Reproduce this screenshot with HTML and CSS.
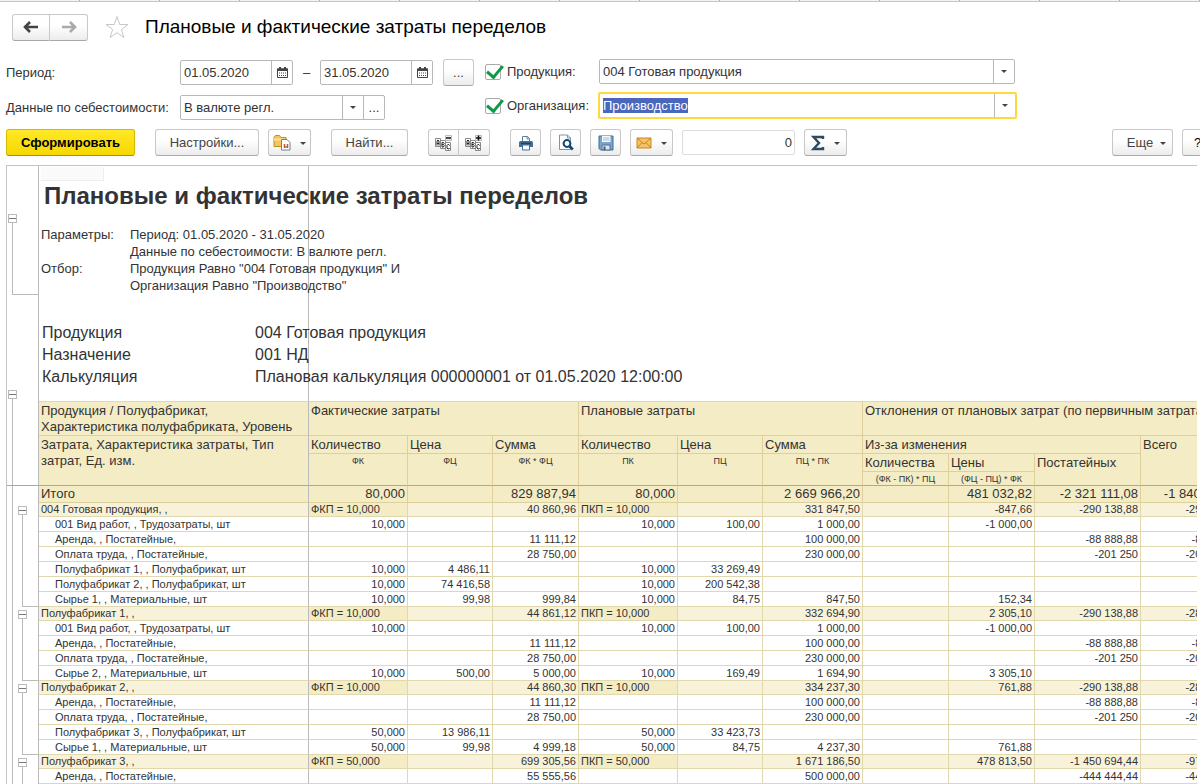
FILE: index.html
```html
<!DOCTYPE html>
<html lang="ru">
<head>
    <meta charset="UTF-8">
    <title>Плановые и фактические затраты переделов</title>
    <meta name="viewport" content="width=device-width, initial-scale=1.0">
    <link rel="stylesheet" href="styles.css">
</head>
<body>
    <div class="tab-strip"></div>

    <header class="page-header">
        <div class="btn-pair">
            <button type="button" class="btn nav" aria-label="Назад">
                <svg width="16" height="12" viewBox="0 0 16 12"><path d="M7 1L2 6l5 5M2 6h13" fill="none" stroke="#444" stroke-width="2.6"/></svg>
            </button>
            <button type="button" class="btn nav" aria-label="Вперед">
                <svg width="16" height="12" viewBox="0 0 16 12"><path d="M9 1l5 5-5 5M14 6H1" fill="none" stroke="#aaa" stroke-width="2.6"/></svg>
            </button>
        </div>
        <button type="button" class="star" aria-label="В избранное">
            <svg width="26" height="24" viewBox="0 0 26 24"><path d="M13 1.500l2.700 8h8.300l-6.600 5 2.500 8-6.900-4.900-6.900 4.900 2.500-8-6.600-5h8.300z" fill="#fff" stroke="#c4c8cc"/></svg>
        </button>
        <h1>Плановые и фактические затраты переделов</h1>
    </header>

    <!-- Report filters -->
    <form class="filters">
        <div class="filters-left">
            <div class="row">
                <label for="dateFrom" class="caption">Период:</label>
                <div class="field date">
                    <input type="text" id="dateFrom" value="01.05.2020">
                    <button type="button" aria-label="Календарь">
                        <svg width="11" height="11" viewBox="0 0 11 11"><path d="M.5 2h10v8.500H.5z" fill="#fff" stroke="#444"/><path d="M0 1.500h11v2.500H0zM2 0h2v2H2zM7 0h2v2H7z" fill="#444"/><path d="M2 6h7M2 8.500h7" stroke="#444" stroke-dasharray="1 1"/></svg>
                    </button>
                </div>
                <span class="dash">–</span>
                <div class="field date">
                    <input type="text" id="dateTo" value="31.05.2020" aria-label="Конец периода">
                    <button type="button" aria-label="Календарь">
                        <svg width="11" height="11" viewBox="0 0 11 11"><path d="M.5 2h10v8.500H.5z" fill="#fff" stroke="#444"/><path d="M0 1.500h11v2.500H0zM2 0h2v2H2zM7 0h2v2H7z" fill="#444"/><path d="M2 6h7M2 8.500h7" stroke="#444" stroke-dasharray="1 1"/></svg>
                    </button>
                </div>
                <button type="button" class="btn period-btn">...</button>
            </div>
            <div class="row">
                <label for="costData" class="caption">Данные по себестоимости:</label>
                <div class="field cost">
                    <select id="costData"><option>В валюте регл.</option></select>
                    <span class="arrow-box"><i class="arrow"></i></span>
                    <button type="button">...</button>
                </div>
            </div>
        </div>
        <div class="filters-right">
            <div class="row">
                <input type="checkbox" id="useProduct" class="check" checked>
                <label for="useProduct" class="check-caption">Продукция:</label>
                <div class="field combo">
                    <input type="text" value="004 Готовая продукция" aria-label="Продукция">
                    <button type="button" aria-label="Выбрать"><i class="arrow"></i></button>
                </div>
            </div>
            <div class="row">
                <input type="checkbox" id="useOrg" class="check" checked>
                <label for="useOrg" class="check-caption">Организация:</label>
                <div class="field combo active">
                    <input type="text" id="orgInput" value="Производство" aria-label="Организация">
                    <button type="button" aria-label="Выбрать"><i class="arrow"></i></button>
                </div>
            </div>
        </div>
    </form>

    <div class="toolbar">
        <button type="button" class="btn primary">Сформировать</button>
        <div class="group">
            <button type="button" class="btn settings">Настройки...</button>
            <button type="button" class="btn drop" aria-label="Варианты отчета">
                <svg width="18" height="17" viewBox="0 0 18 17"><path d="M1 3.500l1.500-2h4l1.500 2h5v9H1z" fill="#f3c55b" stroke="#c08f2e"/><path d="M1 5.500h11" stroke="#fbe2a0" stroke-width="2"/><path d="M8.500 5.500h5.500l3 3v7.500H8.500z" fill="#fff" stroke="#6d8296"/><path d="M11.500 14v-4M14.500 14v-4" stroke="#e0483a" stroke-width="1.500"/><path d="M13 14v-2" stroke="#54a04e" stroke-width="1.500"/></svg>
                <i class="arrow"></i>
            </button>
        </div>
        <button type="button" class="btn find">Найти...</button>
        <div class="btn-pair">
            <button type="button" class="btn icon" aria-label="Свернуть группы">
                <svg width="18" height="18" viewBox="0 0 18 18"><g fill="#fff" stroke="#888"><path d="M.5 4.500h5v8h-5z"/><path d="M5.500 6.500h5v8h-5z"/><path d="M10.500 8.500h5v8h-5z"/><path d="M10.500 1.500h6v5h-6z" fill="#eee" stroke="#bbb"/></g><g fill="none" stroke="#222"><path d="M2 11.500V7l1-1 1 1v4.500M2 9.500h2"/><path d="M7 13V8.500h1.500l.7 1-.7 1H7m1.500 0l.7 1-.7 1.500H7"/><path d="M14.500 11.500l-.7-1h-1l-.8 1v2.500l.8 1h1l.7-1"/></g><path d="M11 4h5" stroke="#111" stroke-width="1.500"/></svg>
            </button>
            <button type="button" class="btn icon" aria-label="Развернуть группы">
                <svg width="18" height="18" viewBox="0 0 18 18"><g fill="#fff" stroke="#888"><path d="M.5 4.500h5v8h-5z"/><path d="M5.500 6.500h5v8h-5z"/><path d="M10.500 8.500h5v8h-5z"/><path d="M10.500 1.500h6v5h-6z" fill="#eee" stroke="#bbb"/></g><g fill="none" stroke="#222"><path d="M2 11.500V7l1-1 1 1v4.500M2 9.500h2"/><path d="M7 13V8.500h1.500l.7 1-.7 1H7m1.500 0l.7 1-.7 1.500H7"/><path d="M14.500 11.500l-.7-1h-1l-.8 1v2.500l.8 1h1l.7-1"/></g><path d="M11 4h5M13.500 1.500v5" stroke="#111" stroke-width="1.500"/></svg>
            </button>
        </div>
        <div class="group">
            <button type="button" class="btn icon" aria-label="Печать">
                <svg width="16" height="16" viewBox="0 0 16 16"><path d="M4.500 7V1.500h5l2 2V7" fill="#fff" stroke="#5c7f9e"/><path d="M9 1.500V4h2.500" fill="none" stroke="#5c7f9e"/><path d="M2.500 6h11q1.500 0 1.500 1.500V12H1V7.500Q1 6 2.500 6z" fill="#416f97"/><path d="M3 8.500h10" stroke="#1d4468" stroke-width="1.500"/><path d="M4.500 10h7v5h-7z" fill="#fff" stroke="#416f97"/></svg>
            </button>
            <button type="button" class="btn icon" aria-label="Предварительный просмотр">
                <svg width="17" height="17" viewBox="0 0 17 17"><path d="M2.500 1h8l3 3v11.500h-11z" fill="#fff" stroke="#7b95aa"/><path d="M10.500 1v3h3" fill="none" stroke="#7b95aa"/><circle cx="10" cy="9.500" r="3.400" fill="#fff" stroke="#0e4775" stroke-width="2"/><path d="M12.300 12l3.500 3.500" stroke="#0e4775" stroke-width="2.600"/></svg>
            </button>
            <button type="button" class="btn icon" aria-label="Сохранить">
                <svg width="16" height="16" viewBox="0 0 16 16"><path d="M1 1h14v14H2.500L1 13.500z" fill="#7ba3cf" stroke="#3f6a94"/><path d="M4 1h8.500v6H4z" fill="#f7f9fb"/><path d="M5 3h6.500M5 5h6.500" stroke="#a8b6c4"/><path d="M4 10h8v5H4z" fill="#dfe4e8" stroke="#55718c"/><path d="M5.500 11.500h2V15h-2z" fill="#3f5c78"/></svg>
            </button>
            <button type="button" class="btn drop" aria-label="Отправить">
                <svg width="16" height="12" viewBox="0 0 16 12"><path d="M1 1h14v10H1z" fill="#f6c366" stroke="#c4851f"/><path d="M1 1l7 6 7-6M1 11l5-5.500M15 11l-5-5.500" fill="none" stroke="#c4851f"/></svg>
                <i class="arrow"></i>
            </button>
            <input type="text" class="total" value="0" aria-label="Сумма ячеек">
            <button type="button" class="btn drop" aria-label="Сумма">
                <svg width="14" height="16" viewBox="0 0 14 16"><path d="M12 4V2H2.500L8 8l-5.500 6H12v-2" fill="none" stroke="#2f4a60" stroke-width="2.400"/></svg>
                <i class="arrow"></i>
            </button>
        </div>
        <div class="group right">
            <button type="button" class="btn more">Еще <i class="arrow"></i></button>
            <button type="button" class="btn help">?</button>
        </div>
    </div>

    <!-- Spreadsheet document -->
    <main class="sheet">
        <section class="intro">
            <div class="gutter">
                <div class="intro-node"><button type="button" class="toggle" aria-label="Свернуть"></button></div>
            </div>
            <div class="intro-body">
                <div class="cursor-cell"></div>
                <h2>Плановые и фактические затраты переделов</h2>
                <dl class="params">
                    <dt>Параметры:</dt>
                    <dd>Период: 01.05.2020 - 31.05.2020<br>Данные по себестоимости: В валюте регл.</dd>
                    <dt>Отбор:</dt>
                    <dd>Продукция Равно "004 Готовая продукция" И<br>Организация Равно "Производство"</dd>
                </dl>
                <dl class="product">
                    <dt>Продукция</dt><dd>004 Готовая продукция</dd>
                    <dt>Назначение</dt><dd>001 НД</dd>
                    <dt>Калькуляция</dt><dd>Плановая калькуляция 000000001 от 01.05.2020 12:00:00</dd>
                </dl>
            </div>
        </section>

        <table class="report">
            <colgroup>
                <col class="w-l1"><col class="w-l2"><col class="w-name">
                <col class="w-qty"><col class="w-price"><col class="w-sum">
                <col class="w-qty"><col class="w-price"><col class="w-plan">
                <col class="w-sum"><col class="w-sum"><col class="w-item"><col class="w-item">
            </colgroup>
            <thead>
                <tr class="spacer"><td class="l1 start" rowspan="5"><button type="button" class="toggle" aria-label="Свернуть"></button></td><td class="l2 frozen" rowspan="5"></td><td class="name"></td><td colspan="10"></td></tr>
                <tr class="h-top"><th class="name">Продукция / Полуфабрикат, Характеристика полуфабриката, Уровень</th><th colspan="3">Фактические затраты</th><th colspan="3">Плановые затраты</th><th colspan="4">Отклонения от плановых затрат (по первичным затратам)</th></tr>
                <tr class="h-mid"><th class="name frozen" rowspan="3">Затрата, Характеристика затраты, Тип затрат, Ед. изм.</th><th>Количество</th><th>Цена</th><th>Сумма</th><th>Количество</th><th>Цена</th><th>Сумма</th><th colspan="3">Из-за изменения</th><th class="frozen" rowspan="3">Всего</th></tr>
                <tr class="h-sub"><th class="formula frozen" rowspan="2">ФК</th><th class="formula frozen" rowspan="2">ФЦ</th><th class="formula frozen" rowspan="2">ФК * ФЦ</th><th class="formula frozen" rowspan="2">ПК</th><th class="formula frozen" rowspan="2">ПЦ</th><th class="formula frozen" rowspan="2">ПЦ * ПК</th><th>Количества</th><th>Цены</th><th class="frozen" rowspan="2">Постатейных</th></tr>
                <tr class="h-low"><th class="formula frozen">(ФК - ПК) * ПЦ</th><th class="formula frozen">(ФЦ - ПЦ) * ФК</th></tr>
            </thead>
            <tbody>
                <tr class="grand"><td class="l1" rowspan="20"></td><td class="l2"></td><td class="name">Итого</td><td>80,000</td><td></td><td>829 887,94</td><td>80,000</td><td></td><td>2 669 966,20</td><td></td><td>481 032,82</td><td>-2 321 111,08</td><td>-1 840 078,26</td></tr>

                <tr class="sub"><td class="l2 node" rowspan="7"><button type="button" class="toggle" aria-label="Свернуть"></button></td><td class="name">004 Готовая продукция, ,</td><td class="coef">ФКП = 10,000</td><td></td><td>40 860,96</td><td class="coef">ПКП = 10,000</td><td></td><td>331 847,50</td><td></td><td>-847,66</td><td>-290 138,88</td><td>-290 986,54</td></tr>
                <tr><td class="name">001 Вид работ, , Трудозатраты, шт</td><td>10,000</td><td></td><td></td><td>10,000</td><td>100,00</td><td>1 000,00</td><td></td><td>-1 000,00</td><td></td><td></td></tr>
                <tr><td class="name">Аренда, , Постатейные,</td><td></td><td></td><td>11 111,12</td><td></td><td></td><td>100 000,00</td><td></td><td></td><td>-88 888,88</td><td>-88 888,88</td></tr>
                <tr><td class="name">Оплата труда, , Постатейные,</td><td></td><td></td><td>28 750,00</td><td></td><td></td><td>230 000,00</td><td></td><td></td><td>-201 250</td><td>-201 250,00</td></tr>
                <tr><td class="name">Полуфабрикат 1, , Полуфабрикат, шт</td><td>10,000</td><td>4 486,11</td><td></td><td>10,000</td><td>33 269,49</td><td></td><td></td><td></td><td></td><td></td></tr>
                <tr><td class="name">Полуфабрикат 2, , Полуфабрикат, шт</td><td>10,000</td><td>74 416,58</td><td></td><td>10,000</td><td>200 542,38</td><td></td><td></td><td></td><td></td><td></td></tr>
                <tr><td class="name">Сырье 1, , Материальные, шт</td><td>10,000</td><td>99,98</td><td>999,84</td><td>10,000</td><td>84,75</td><td>847,50</td><td></td><td>152,34</td><td></td><td></td></tr>

                <tr class="sub"><td class="l2 node" rowspan="5"><button type="button" class="toggle" aria-label="Свернуть"></button></td><td class="name">Полуфабрикат 1, ,</td><td class="coef">ФКП = 10,000</td><td></td><td>44 861,12</td><td class="coef">ПКП = 10,000</td><td></td><td>332 694,90</td><td></td><td>2 305,10</td><td>-290 138,88</td><td>-287 833,78</td></tr>
                <tr><td class="name">001 Вид работ, , Трудозатраты, шт</td><td>10,000</td><td></td><td></td><td>10,000</td><td>100,00</td><td>1 000,00</td><td></td><td>-1 000,00</td><td></td><td></td></tr>
                <tr><td class="name">Аренда, , Постатейные,</td><td></td><td></td><td>11 111,12</td><td></td><td></td><td>100 000,00</td><td></td><td></td><td>-88 888,88</td><td>-88 888,88</td></tr>
                <tr><td class="name">Оплата труда, , Постатейные,</td><td></td><td></td><td>28 750,00</td><td></td><td></td><td>230 000,00</td><td></td><td></td><td>-201 250</td><td>-201 250,00</td></tr>
                <tr><td class="name">Сырье 2, , Материальные, шт</td><td>10,000</td><td>500,00</td><td>5 000,00</td><td>10,000</td><td>169,49</td><td>1 694,90</td><td></td><td>3 305,10</td><td></td><td></td></tr>

                <tr class="sub"><td class="l2 node" rowspan="5"><button type="button" class="toggle" aria-label="Свернуть"></button></td><td class="name">Полуфабрикат 2, ,</td><td class="coef">ФКП = 10,000</td><td></td><td>44 860,30</td><td class="coef">ПКП = 10,000</td><td></td><td>334 237,30</td><td></td><td>761,88</td><td>-290 138,88</td><td>-289 377,00</td></tr>
                <tr><td class="name">Аренда, , Постатейные,</td><td></td><td></td><td>11 111,12</td><td></td><td></td><td>100 000,00</td><td></td><td></td><td>-88 888,88</td><td>-88 888,88</td></tr>
                <tr><td class="name">Оплата труда, , Постатейные,</td><td></td><td></td><td>28 750,00</td><td></td><td></td><td>230 000,00</td><td></td><td></td><td>-201 250</td><td>-201 250,00</td></tr>
                <tr><td class="name">Полуфабрикат 3, , Полуфабрикат, шт</td><td>50,000</td><td>13 986,11</td><td></td><td>50,000</td><td>33 423,73</td><td></td><td></td><td></td><td></td><td></td></tr>
                <tr><td class="name">Сырье 1, , Материальные, шт</td><td>50,000</td><td>99,98</td><td>4 999,18</td><td>50,000</td><td>84,75</td><td>4 237,30</td><td></td><td>761,88</td><td></td><td></td></tr>

                <tr class="sub"><td class="l2 node open" rowspan="2"><button type="button" class="toggle" aria-label="Свернуть"></button></td><td class="name">Полуфабрикат 3, ,</td><td class="coef">ФКП = 50,000</td><td></td><td>699 305,56</td><td class="coef">ПКП = 50,000</td><td></td><td>1 671 186,50</td><td></td><td>478 813,50</td><td>-1 450 694,44</td><td>-971 880,94</td></tr>
                <tr><td class="name">Аренда, , Постатейные,</td><td></td><td></td><td>55 555,56</td><td></td><td></td><td>500 000,00</td><td></td><td></td><td>-444 444,44</td><td>-444 444,44</td></tr>
            </tbody>
        </table>
    </main>

    <script>
        var orgInput = document.getElementById("orgInput");
        orgInput.focus();
        orgInput.select();
    </script>
</body>
</html>
```
FILE: styles.css
```css
* {
    box-sizing: border-box;
}
body {
    margin: 0;
    height: 100vh;
    overflow: hidden;
    display: flex;
    flex-direction: column;
    background: #fff;
    color: #333;
    font-family: "Liberation Sans", Arial, sans-serif;
    font-size: 13px;
}
button, input, select {
    font: inherit;
    color: inherit;
}
svg {
    display: block;
}
h1, h2, dl, dd {
    margin: 0;
}

/* bottom edge of the window tabs */
.tab-strip {
    flex: none;
    height: 2px;
    border-bottom: 1px solid #c4c4c4;
    background: repeating-linear-gradient(90deg, #f4f4f4 0 79px, #aaa 79px 80px);
}

/* ---- header ---- */
.page-header {
    display: flex;
    align-items: center;
    height: 50px;
    padding-left: 12px;
}
.page-header h1 {
    font-size: 19px;
    font-weight: normal;
    color: #000;
}
.star {
    margin: 0 15px 0 16px;
    padding: 0;
    border: none;
    background: none;
}

/* ---- buttons ---- */
.btn {
    display: flex;
    align-items: center;
    justify-content: center;
    height: 27px;
    padding: 0;
    border: 1px solid #c8c8c8;
    border-bottom-color: #a8a8a8;
    border-radius: 3px;
    background: linear-gradient(#fff 40%, #ececec);
    color: #444;
    white-space: nowrap;
}
.btn-pair {
    display: flex;
}
.btn-pair .btn:first-child {
    border-radius: 3px 0 0 3px;
}
.btn-pair .btn:last-child {
    border-left: none;
    border-radius: 0 3px 3px 0;
}
.nav { width: 38px; }
.icon { width: 31px; }
.settings { width: 104px; }
.find { width: 77px; }
.help { width: 31px; color: #000; }
.drop, .more {
    gap: 9px;
    width: 43px;
}
.more {
    width: 61px;
    gap: 7px;
    padding-left: 8px;
}
.btn .arrow {
    margin-top: 2px;
}
.primary {
    width: 129px;
    border-color: #d8b800;
    border-bottom-color: #a89000;
    background: linear-gradient(#ffe926, #f6d800);
    color: #000;
    font-weight: bold;
}
.arrow {
    border: 3px solid transparent;
    border-top-color: #444;
    border-bottom: none;
}

/* ---- filters ---- */
.filters {
    display: flex;
    padding: 6px 0 0 6px;
}
.filters-left {
    display: flex;
    flex-direction: column;
    gap: 8px;
    width: 479px;
    padding-top: 1px;
}
.filters-right {
    display: flex;
    flex-direction: column;
    gap: 7px;
}
.row {
    display: flex;
    align-items: center;
    height: 27px;
}
.caption {
    width: 174px;
}
.dash {
    width: 27px;
    text-align: center;
}
.field {
    display: flex;
    height: 25px;
    border: 1px solid #b8b8b8;
    border-radius: 2px;
    background: #fff;
}
.field input, .field select {
    flex: 1;
    min-width: 0;
    padding: 0 0 1px 3px;
    border: none;
    outline: none;
    appearance: none;
    background: none;
}
.field button, .arrow-box {
    display: flex;
    align-items: center;
    justify-content: center;
    width: 21px;
    padding: 0;
    border: none;
    border-left: 1px solid #b8b8b8;
    background: none;
}
.date {
    width: 113px;
}
.cost {
    width: 205px;
}
.period-btn {
    width: 31px;
    margin-left: 10px;
}
.combo {
    width: 416px;
    margin: 0 1px;
}
.combo.active {
    width: 419px;
    height: 27px;
    margin: 0;
    border: 2px solid #ffd83d;
}
.combo input::selection {
    background: #4a66bd;
    color: #fff;
}
.check-caption {
    width: 91px;
}
.check {
    appearance: none;
    width: 16px;
    height: 16px;
    margin: 0 6px 0 0;
    border: 1px solid #aaa;
    border-radius: 2px;
    position: relative;
}
.check:checked::after {
    content: "";
    position: absolute;
    left: 4px;
    top: -3px;
    width: 7px;
    height: 13px;
    border: solid #0d9a48;
    border-width: 0 3px 3px 0;
    transform: rotate(40deg);
}

/* ---- toolbar ---- */
.toolbar {
    display: flex;
    gap: 20px;
    height: 44px;
    padding: 8px 0 0 6px;
    margin-right: -13px;
}
.group {
    display: flex;
    gap: 9px;
}
.group.right {
    margin-left: auto;
}
.total {
    width: 113px;
    height: 25px;
    margin: 1px 0;
    padding: 0 2px;
    border: 1px solid #ddd;
    border-radius: 2px;
    text-align: right;
}

/* ---- sheet ---- */
.sheet {
    flex: 1;
    min-height: 0;
    overflow: hidden;
    margin: 0 3px 0 6px;
    border: solid #c4c4c4;
    border-width: 1px 0 0 1px;
}
.intro {
    display: flex;
    height: 223px;
}
.gutter {
    width: 32px;
    padding: 48px 0 0 1px;
    border-right: 1px solid #bbb;
}
.intro-node {
    height: 81px;
    background:
        linear-gradient(#bbb, #bbb) 4px 0 / 1px 100% no-repeat,
        linear-gradient(#bbb, #bbb) 4px 100% / 100% 1px no-repeat;
}
.toggle {
    display: block;
    width: 9px;
    height: 9px;
    padding: 0;
    border: 1px solid #bbb;
    background: linear-gradient(#777, #777) center / 7px 1px no-repeat #fff;
}
/* the line marks the frozen first column */
.intro-body {
    flex: 1;
    padding: 1px 0 0 2px;
    background: linear-gradient(#bbb, #bbb) 269px 0 / 1px 100% no-repeat;
}
.cursor-cell {
    width: 63px;
    height: 14px;
    border: solid #eee;
    border-width: 0 1px 1px 0;
    background: #fafafa;
}
.intro-body h2 {
    padding-left: 3px;
    font-size: 24px;
    line-height: 30px;
}
.params, .product {
    display: grid;
    grid-template-columns: 89px 1fr;
    padding-top: 15px;
    line-height: 17px;
}
.product {
    grid-template-columns: 213px 1fr;
    padding: 28px 0 0 1px;
    font-size: 16px;
    line-height: 22px;
}

/* ---- report table ---- */
.report {
    table-layout: fixed;
    width: 1240px;
    border-spacing: 0;
    font-size: 11px;
    line-height: 14px;
}
.w-l1 { width: 11px; }
.w-l2 { width: 21px; }
.w-name { width: 270px; }
.w-qty { width: 99px; }
.w-price { width: 85px; }
.w-sum { width: 86px; }
.w-plan { width: 100px; }
.w-item { width: 106px; }

.report td, .report th {
    padding: 0 2px;
    border: solid #e2d8ae;
    border-width: 0 1px 1px 0;
    text-align: right;
    vertical-align: top;
    white-space: nowrap;
}
.report th {
    padding-top: 1px;
    background: #f4ecc5;
    border-color: #ddd09c;
    text-align: left;
    font-size: 13px;
    font-weight: normal;
    line-height: 16px;
}
.report .name {
    border-right-color: #bbb;
    text-align: left;
}
.report th.name {
    white-space: normal;
}
.report td.name {
    padding-left: 16px;
}
.report .frozen {
    border-bottom-color: #a8a8a8;
}
.report th.formula {
    font-size: 9px;
    line-height: 12px;
    text-align: center;
}
.spacer td { border-right: none; }
.report .spacer .name { border-right: 1px solid #bbb; }
.spacer { height: 13px; }
.h-top { height: 34px; }
.h-mid { height: 18px; }
.h-sub { height: 18px; }
.h-low { height: 14px; }

.grand td {
    background: #f4ecc5;
    border-color: #ddd09c;
    font-size: 13px;
    line-height: 16px;
}
.sub td {
    background: #f8f2da;
    line-height: 13px;
}
.report .sub .coef {
    background: #f4ecc5;
    text-align: left;
}
.report .grand .name, .report .sub .name {
    padding-left: 2px;
}

/* outline levels on the left */
.report td.l1 {
    padding: 0 1px;
    border: none;
    background: linear-gradient(#bbb, #bbb) 5px 0 / 1px 100% no-repeat;
}
.report td.l1.start {
    padding-top: 1px;
    border-bottom: 1px solid #a8a8a8;
    background-position: 5px 5px;
}
.report td.l2 {
    padding: 0;
    border-right: 1px solid #bbb;
    border-bottom: none;
    background: none;
}
.report td.l2.frozen {
    border-bottom: 1px solid #a8a8a8;
}
.report td.node {
    padding-top: 3px;
    background:
        linear-gradient(#bbb, #bbb) 4px 5px / 1px 100% no-repeat,
        linear-gradient(#bbb, #bbb) 4px 100% / 100% 1px no-repeat;
}
.report td.node.open {
    background: linear-gradient(#bbb, #bbb) 4px 5px / 1px 100% no-repeat;
}
```
